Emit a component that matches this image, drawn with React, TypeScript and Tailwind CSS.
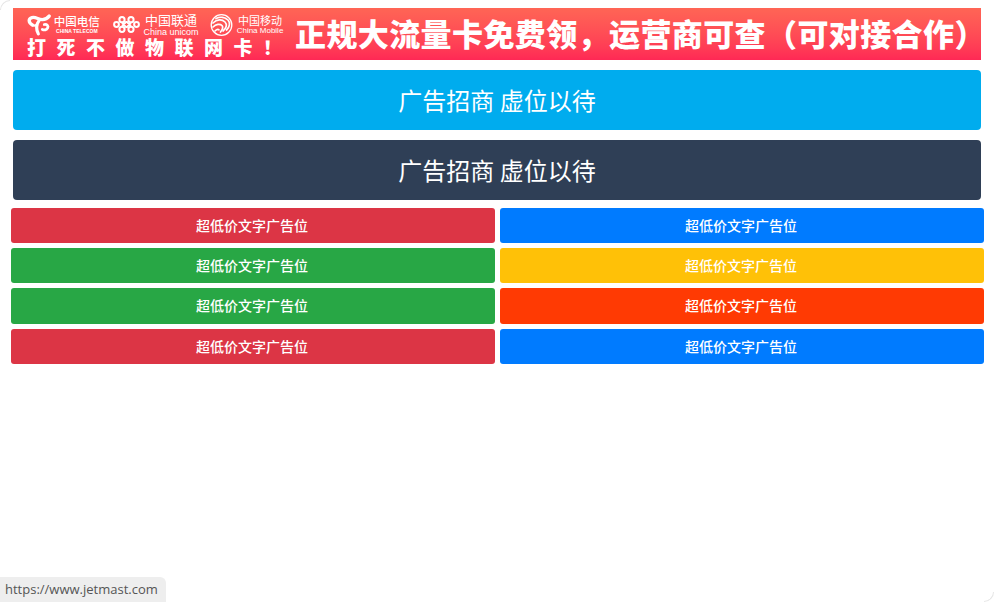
const cjk = "font-['Noto_Sans_CJK_SC','Noto_Sans',sans-serif]";
const latin = "font-['Liberation_Sans',sans-serif]";

const slots = [
  { color: "bg-[#dc3545]", h: "h-[35px]" },
  { color: "bg-[#007bff]", h: "h-[35px]" },
  { color: "bg-[#28a745]", h: "h-[35px]" },
  { color: "bg-[#ffc107]", h: "h-[35px]" },
  { color: "bg-[#28a745]", h: "h-[36px] pb-[1px]" },
  { color: "bg-[#ff3a03]", h: "h-[36px] pb-[1px]" },
  { color: "bg-[#dc3545]", h: "h-[35px]" },
  { color: "bg-[#007bff]", h: "h-[35px]" },
];

function TelecomLogo() {
  return (
    <svg width="24" height="22" viewBox="0 0 24 22" fill="none" stroke="white" strokeLinecap="round">
      <path d="M5.500 11C1.500 9 1 4.500 5 3.500c4-1 6.500 2 10.500 2 3 0 5.500-1.500 7-3.500" strokeWidth="3.400" />
      <path d="M12.500 6C9.500 10 9 15 11.500 20" strokeWidth="3.200" />
      <path d="M17.500 10.500c3-.5 4.500 1.500 3.500 3.500-1 2-3.500 2.500-5.500 1.500" strokeWidth="2.800" />
      <path d="M5 11c1.500.8 3 .8 4.500 0" strokeWidth="2.200" />
    </svg>
  );
}

function UnicomLogo() {
  return (
    <svg width="27" height="17" viewBox="0 0 27 17" fill="none" stroke="white" strokeWidth="2">
      <circle cx="3.500" cy="8.500" r="2.400" />
      <circle cx="23.500" cy="8.500" r="2.400" />
      <circle cx="9" cy="3.700" r="2.600" />
      <circle cx="18" cy="3.700" r="2.600" />
      <circle cx="9" cy="13.300" r="2.600" />
      <circle cx="18" cy="13.300" r="2.600" />
      <path d="M13.500 5.500 18 10M13.500 5.500 9 10M13.500 11.500 9 7M13.500 11.500 18 7" strokeWidth="1.800" />
    </svg>
  );
}

function MobileLogo() {
  return (
    <svg width="23" height="24" viewBox="0 0 23 24" fill="none" stroke="white" strokeWidth="1.700" strokeLinecap="round">
      <circle cx="11.500" cy="12" r="10.300" strokeWidth="1.300" />
      <path d="M3 10c4-4 9-4 12-1 2.500 2.500 1.500 6-2 9" />
      <path d="M6 5.500c4-2 9-1.500 12 1.500 2.500 2.800 1.800 7-1.500 10" />
      <path d="M3 14c3-3 7-3.500 9-1.500 1.500 1.800.5 4-1.500 6.500" />
      <path d="M5 18c1.500-1.500 3-2 4-1.200" />
    </svg>
  );
}

function Banner() {
  return (
    <div className={`flex h-[52px] bg-gradient-to-b from-[#ff6555] to-[#ff2855] pt-[3px] pl-[14px] text-white ${cjk}`}>
      <div className="flex w-[255px] shrink-0 flex-col">
        <div className="flex h-[27px] items-center">
          <TelecomLogo />
          <div className="ml-[3px] flex w-[47px] flex-col items-center">
            <span className="text-[11.5px] leading-[13px] font-medium">中国电信</span>
            <span className={`text-[5px] leading-[6px] font-bold whitespace-nowrap ${latin}`}>CHINA TELECOM</span>
          </div>
          <div className="ml-[13px]">
            <UnicomLogo />
          </div>
          <div className="ml-[5px] flex w-[52px] flex-col items-center">
            <span className="text-[13px] leading-[15px]">中国联通</span>
            <span className={`text-[9px] leading-[10px] whitespace-nowrap ${latin}`}>China unicom</span>
          </div>
          <div className="ml-[13px]">
            <MobileLogo />
          </div>
          <div className="ml-[5px] flex w-[44px] flex-col items-center">
            <span className="text-[11px] leading-[12px]">中国移动</span>
            <span className={`text-[8px] leading-[9px] whitespace-nowrap ${latin}`}>China Mobile</span>
          </div>
        </div>
        <div className="flex h-[18px] items-center justify-between text-[19px] leading-[18px] font-black">
          {"打死不做物联网卡！".split("").map((c, i) => (
            <span key={i}>{c}</span>
          ))}
        </div>
      </div>
      <div className="mt-[2px] ml-[13px] text-[31px] leading-[40px] font-black tracking-[0.4px] whitespace-nowrap">
        正规大流量卡免费领，运营商可查（可对接合作）
      </div>
    </div>
  );
}

export default function App() {
  return (
    <div className={`relative h-[602px] w-full overflow-hidden bg-white ${cjk}`}>
      <div className="flex flex-col gap-[10px] px-[13px] pt-[8px]">
        <Banner />
        <div className="flex h-[60px] items-center justify-center rounded-[4px] bg-[#00acee] text-[24px] text-white">
          广告招商 虚位以待
        </div>
        <div className="flex h-[60px] items-center justify-center rounded-[4px] bg-[#2f3f56] text-[24px] text-white">
          广告招商 虚位以待
        </div>
      </div>

      {/* text ad slots */}
      <div className="mt-[8px] grid grid-cols-2 gap-[5px] pr-[10px] pl-[11px]">
        {slots.map((s, i) => (
          <div
            key={i}
            className={`flex items-center justify-center rounded-[3px] pr-[2px] text-[14px] font-medium text-white ${s.color} ${s.h}`}
          >
            超低价文字广告位
          </div>
        ))}
      </div>

      {/* browser link preview + window corners */}
      <div className="absolute bottom-0 left-0 flex h-[25px] w-[166px] items-center rounded-tr-[6px] bg-[#eeeeee] pt-[1px] pl-[5px] font-['Open_Sans',sans-serif] text-[13px] whitespace-nowrap text-[#555555]">
        https://www.jetmast.com
      </div>
      <div className="absolute top-0 left-0 h-[10px] w-[10px] rounded-tl-[10px] border-t border-l border-[#e6e6e6]" />
      <div className="absolute right-0 bottom-0 h-[10px] w-[10px] rounded-br-[10px] border-r border-b border-[#e6e6e6]" />
    </div>
  );
}
